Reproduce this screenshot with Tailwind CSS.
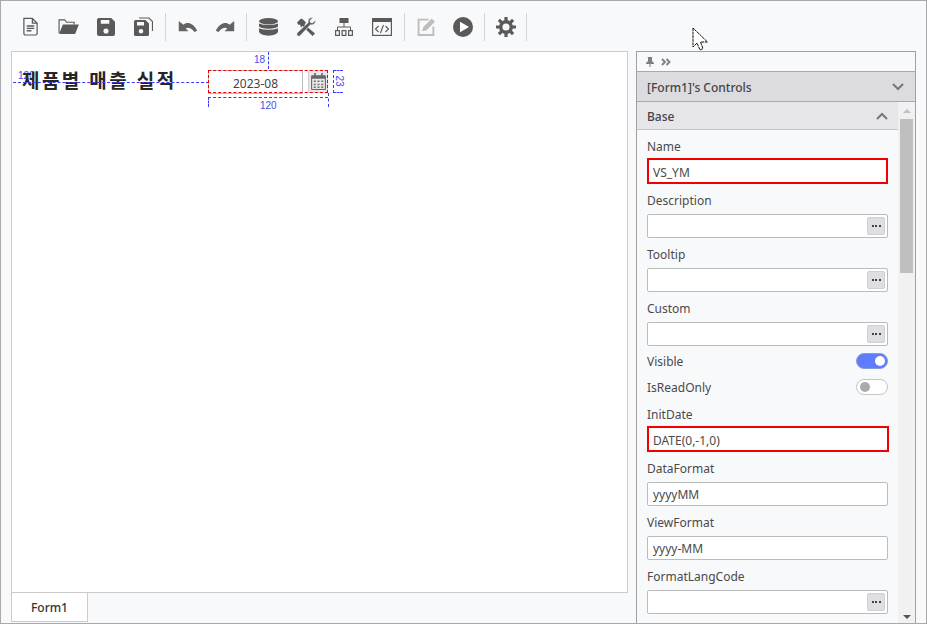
<!DOCTYPE html>
<html lang="ko"><head><meta charset="utf-8"><script src="https://cdn.jsdelivr.net/npm/@tailwindcss/browser@4"></script></head>
<body class="m-0 overflow-hidden">
<div class="relative w-[927px] h-[624px] overflow-hidden bg-[#f8f9fb] border border-[#a9a9a9] flex flex-col text-[12px] text-[#4a4a4a] font-['Noto_Sans','Noto_Sans_CJK_KR',sans-serif]">
  <!-- toolbar -->
  <div class="h-[50px] shrink-0 flex items-center pl-[10px] pt-[1px] text-[#5a5a5a]">
    <div class="w-[38px] flex justify-center"><svg width="17" height="19" viewBox="0 0 18 20" fill="none" stroke="currentColor" stroke-width="1.3"><path d="M2 1.500h9l5 5v11a1.500 1.500 0 0 1-1.500 1.500h-11A1.500 1.500 0 0 1 2 17.500z"/><path d="M11 1.500v5h5" /><path d="M5 9.500h8M5 12h8M5 14.500h5" stroke-width="1.500"/></svg></div>
    <div class="w-[38px] flex justify-center"><svg width="21" height="17" viewBox="0 0 22 18"><path fill="none" stroke="currentColor" stroke-width="1.200" d="M1 16V2h6l2 2.500h8V7"/><path fill="currentColor" d="M5 7h17l-4 10H1z"/></svg></div>
    <div class="w-[38px] flex justify-center"><svg width="18" height="18" viewBox="0 0 19 19"><path fill="currentColor" fill-rule="evenodd" d="M2 0h13l4 4v13a2 2 0 0 1-2 2H2a2 2 0 0 1-2-2V2a2 2 0 0 1 2-2zm2 2v4h9V2zm5.500 9a2.700 2.700 0 1 0 0 5.400a2.700 2.700 0 0 0 0-5.400z"/></svg></div>
    <div class="w-[37px] flex justify-center"><svg width="19" height="19" viewBox="0 0 19 19"><path fill="none" stroke="currentColor" stroke-width="1.200" d="M5 1h10l3.500 3.500V14"/><path fill="currentColor" fill-rule="evenodd" d="M1.500 3h10l3.500 3.500V17.500a1.500 1.500 0 0 1-1.500 1.500h-12A1.500 1.500 0 0 1 0 17.500v-13A1.500 1.500 0 0 1 1.500 3zm1.500 2v3.500h7V5zm4 7a2.300 2.300 0 1 0 0 4.600a2.300 2.300 0 0 0 0-4.600z"/></svg></div>
    <div class="w-px h-[28px] bg-[#d4d4d4] mx-[3px]"></div>
    <div class="w-[37px] flex justify-center"><svg width="20" height="12" viewBox="0 0 20 13"><path fill="#636363" d="M5 4C9 .8 15 1.500 20 10.500l-3 1.500C13.500 7.500 10 6.500 7.500 8L10.500 11H0V0z"/></svg></div>
    <div class="w-[38px] flex justify-center"><svg width="20" height="12" viewBox="0 0 20 13"><path fill="#636363" d="M15 4C11 .8 5 1.500 0 10.500l3 1.500C6.500 7.500 10 6.500 12.500 8L9.500 11H20V0z"/></svg></div>
    <div class="w-px h-[28px] bg-[#d4d4d4] mx-[2px]"></div>
    <div class="w-[38px] flex justify-center"><svg width="19" height="18" viewBox="0 0 19 18" fill="currentColor"><ellipse cx="9.500" cy="3.200" rx="9.500" ry="3.200"/><path d="M0 5.200c2 2.300 17 2.300 19 0v3c-1 3.300-18 3.300-19 0zM0 10c2 2.300 17 2.300 19 0v3.500c-1 5.500-18 5.500-19 0z"/></svg></div>
    <div class="w-[37px] flex justify-center"><svg width="20" height="20" viewBox="0 0 20 20" fill="currentColor"><path d="M1 5.500 5 1.500 7 2.500 10 5.500 8.500 7.500 19 16.500 16.500 19 6.500 9 5 10.500 4 7.500 2.500 8z"/><path d="M19.500 3 16.500 6 14.500 5.500 14 3.500 17 .8C14.500 0 11.500 2 12.200 5.500L1.500 15.500C.5 16.500.5 18 1.500 18.800S3.500 19.500 4.300 18.500L14.500 7.800C17.500 8.500 20 6 19.500 3z" stroke="#f8f9fb" stroke-width=".7"/></svg></div>
    <div class="w-[39px] flex justify-center"><svg width="18" height="18" viewBox="0 0 18 18"><rect x="4.500" width="9" height="5" fill="currentColor"/><path fill="none" stroke="currentColor" d="M9 5v4M2.500 12V9h13v3"/><path fill="none" stroke="currentColor" stroke-width="1.200" d="M.6 12.600h3.800v4.800H.6zM7.100 12.600h3.800v4.800H7.100zM13.600 12.600h3.800v4.800h-3.800z"/></svg></div>
    <div class="w-[38px] flex justify-center"><svg width="20" height="18" viewBox="0 0 20 18"><rect x=".6" y=".6" width="18.800" height="16.800" fill="none" stroke="currentColor" stroke-width="1.200"/><rect width="20" height="4" fill="currentColor"/><path fill="none" stroke="currentColor" stroke-width="1.100" d="M6.500 8l-3 3 3 3M13.500 8l3 3-3 3M11.500 7l-3 8"/></svg></div>
    <div class="w-px h-[28px] bg-[#d4d4d4] mx-[3px]"></div>
    <div class="w-[36px] flex justify-center"><svg width="19" height="19" viewBox="0 0 18 18"><path fill="none" stroke="#bdbdbd" stroke-width="1.800" d="M11 2.500H1.500v14.500h14V9"/><path fill="#bdbdbd" d="M6 9.500L14 1.500l3 3-8 8-4 1z"/></svg></div>
    <div class="w-[37px] flex justify-center"><svg width="20" height="20" viewBox="0 0 20 20"><circle cx="10" cy="10" r="10" fill="currentColor"/><path fill="#fff" d="M7 4.800v10.400L16 10z"/></svg></div>
    <div class="w-px h-[28px] bg-[#d4d4d4] mx-[3px]"></div>
    <div class="w-[35px] flex justify-center"><svg width="20" height="20" viewBox="0 0 20 20"><circle cx="10" cy="10" r="5.300" fill="none" stroke="currentColor" stroke-width="3.400"/><path stroke="currentColor" stroke-width="3.200" d="M10 0v4M10 16v4M0 10h4M16 10h4M2.900 2.900l2.800 2.800M14.300 14.300l2.800 2.800M17.100 2.900l-2.800 2.800M5.700 14.300l-2.800 2.800"/></svg></div>
    <div class="w-px h-[28px] bg-[#d4d4d4] mx-[3px]"></div>
  </div>

  <div class="flex-1 min-h-0 flex pl-[10px] pr-[11px] gap-[8px]">
    <!-- designer -->
    <div class="w-[617px] shrink-0 flex flex-col">
      <div class="relative h-[542px] shrink-0 bg-white border border-[#cbcbcb]">
        <span class="absolute left-[6px] top-[18px] text-[10px] leading-[12px] text-[#4a4af0] font-['Liberation_Sans',sans-serif]">120</span>
        <h1 class="absolute left-[10px] top-[15px] m-0 text-[19px] leading-[26px] font-bold text-[#262626] tracking-[2.400px] whitespace-nowrap font-['Noto_Sans_CJK_KR',sans-serif]">제품별 매출 실적</h1>
        <div class="absolute left-[1px] top-[30px] w-[196px] border-t border-dashed border-[#3a3aff]"></div>
        <div class="absolute left-[256px] top-0 h-[17px] border-l border-dashed border-[#3a3aff]"></div>
        <span class="absolute left-[242px] top-[1px] text-[10px] leading-[14px] text-[#4a4af0] font-['Liberation_Sans',sans-serif]">18</span>
        <div class="absolute left-[196px] top-[18px] w-[95px] h-[24px] border border-[#bdbdbd] bg-white flex items-center justify-center pt-[3px] text-[12px] text-[#444]">2023-08</div>
        <div class="absolute left-[296px] top-[18px] w-[20px] h-[23px] border border-[#cfcfcf] bg-[#e8e8ea] flex items-center justify-center"><svg width="15" height="17" viewBox="0 0 14 16"><path fill="#666" d="M3 0h1.500v2h5V0H11v2h2a1 1 0 0 1 1 1v12a1 1 0 0 1-1 1H1a1 1 0 0 1-1-1V3a1 1 0 0 1 1-1h2zM1 5.500V15h12V5.500z"/><path fill="#777" d="M2.500 7h2v1.500h-2zM6 7h2v1.500H6zM9.500 7h2v1.500h-2zM2.500 10h2v1.500h-2zM6 10h2v1.500H6zM9.500 10h2v1.500h-2zM2.500 12.800h2v1.200h-2zM6 12.800h2v1.200H6zM9.500 12.800h2v1.200h-2z"/></svg></div>
        <div class="absolute left-[196px] top-[18px] w-[120px] h-[23px] border border-dashed border-[#f00000]"></div>
        <div class="absolute left-[196px] top-[45px] w-[120px] border-t border-dashed border-[#3a3aff]"></div>
        <div class="absolute left-[196px] top-[45px] h-[10px] border-l border-dashed border-[#3a3aff]"></div>
        <div class="absolute left-[316px] top-[41px] h-[14px] border-l border-dashed border-[#3a3aff]"></div>
        <span class="absolute left-[248px] top-[48px] text-[10px] leading-[12px] text-[#4a4af0] font-['Liberation_Sans',sans-serif]">120</span>
        <div class="absolute left-[321px] top-[18px] w-[10px] h-[23px] border-y border-l border-dashed border-[#3a3aff]"></div>
        <span class="absolute left-[321px] top-[23px] text-[10px] leading-[12px] text-[#4a4af0] rotate-90 font-['Liberation_Sans',sans-serif]">23</span>
      </div>
      <div class="flex"><div class="w-[77px] h-[29px] pt-[1px] bg-white border-x border-b border-[#cbcbcb] flex items-center justify-center font-medium text-[#333]">Form1</div></div>
    </div>

    <!-- panel -->
    <div class="w-[280px] shrink-0 border-x border-t border-[#a0a0a0] flex flex-col mt-0 h-[573px]">
      <div class="h-[19px] shrink-0 flex items-center pl-[8px] gap-[6px] text-[#888]">
        <svg width="10" height="10" viewBox="0 0 10 10" fill="#808080"><path d="M2.500 0h5l-.5 1v3l2 2v1H5.500v3h-1V7H1V6l2-2V1z"/></svg>
        <svg width="10" height="8" viewBox="0 0 10 8" fill="none" stroke="#808080" stroke-width="1.900"><path d="M1 1l3 3-3 3M5.500 1l3 3-3 3"/></svg>
      </div>
      <div class="h-[31px] shrink-0 bg-[#dcdce0] border-y border-[#a9a9a9] flex items-center justify-between pl-[10px] pr-[11px] font-medium text-[#444]">
        <span class="mt-[2px]">[Form1]'s Controls</span>
        <svg width="12" height="8" viewBox="0 0 12 8" fill="none" stroke="#777" stroke-width="2"><path d="M1 1l5 5 5-5"/></svg>
      </div>
      <div class="flex-1 min-h-0 flex">
        <div class="w-[261px] shrink-0 flex flex-col">
          <div class="h-[28px] shrink-0 bg-[#e6e6ea] border-b border-[#c8c8c8] flex items-center justify-between pl-[10px] pr-[10px] font-medium text-[#444]">
            <span class="mt-[2px]">Base</span>
            <svg width="12" height="8" viewBox="0 0 12 8" fill="none" stroke="#777" stroke-width="2"><path d="M1 7l5-5 5 5"/></svg>
          </div>
          <div class="px-[10px] flex flex-col">
            <label class="h-[28px] flex items-end pb-[2px] leading-[18px]">Name</label>
            <div class="w-[241px] h-[26px] pt-[3px] border-2 border-[#f00000] bg-white flex items-center pl-[4px]">VS_YM</div>
            <label class="h-[30px] flex items-end pb-[4px] leading-[18px]">Description</label>
            <div class="w-[241px] h-[24px] border border-[#bcbcbc] rounded-[2px] bg-white flex items-center justify-end pr-[2px]"><button class="w-[18px] h-[18px] bg-[#dfdfe3] border border-[#cfcfd3] rounded-[2px] flex items-center justify-center gap-[1.500px]"><i class="w-[2px] h-[2px] bg-[#444]"></i><i class="w-[2px] h-[2px] bg-[#444]"></i><i class="w-[2px] h-[2px] bg-[#444]"></i></button></div>
            <label class="h-[30px] flex items-end pb-[4px] leading-[18px]">Tooltip</label>
            <div class="w-[241px] h-[24px] border border-[#bcbcbc] rounded-[2px] bg-white flex items-center justify-end pr-[2px]"><button class="w-[18px] h-[18px] bg-[#dfdfe3] border border-[#cfcfd3] rounded-[2px] flex items-center justify-center gap-[1.500px]"><i class="w-[2px] h-[2px] bg-[#444]"></i><i class="w-[2px] h-[2px] bg-[#444]"></i><i class="w-[2px] h-[2px] bg-[#444]"></i></button></div>
            <label class="h-[30px] flex items-end pb-[4px] leading-[18px]">Custom</label>
            <div class="w-[241px] h-[24px] border border-[#bcbcbc] rounded-[2px] bg-white flex items-center justify-end pr-[2px]"><button class="w-[18px] h-[18px] bg-[#dfdfe3] border border-[#cfcfd3] rounded-[2px] flex items-center justify-center gap-[1.500px]"><i class="w-[2px] h-[2px] bg-[#444]"></i><i class="w-[2px] h-[2px] bg-[#444]"></i><i class="w-[2px] h-[2px] bg-[#444]"></i></button></div>
            <div class="w-[241px] h-[26px] mt-[2px] flex items-center justify-between"><span class="pt-[2px]">Visible</span><span class="w-[32px] h-[16px] rounded-full bg-[#5f7cff] border border-[#8a9ad8] flex items-center justify-end pr-[2px]"><i class="w-[10px] h-[10px] rounded-full bg-white"></i></span></div>
            <div class="w-[241px] h-[26px] flex items-center justify-between"><span class="pt-[2px]">IsReadOnly</span><span class="w-[32px] h-[16px] rounded-full bg-white border border-[#c4c4c4] flex items-center pl-[3px]"><i class="w-[10px] h-[10px] rounded-full bg-[#aaa]"></i></span></div>
            <label class="h-[26px] flex items-end pb-[2px] leading-[18px]">InitDate</label>
            <div class="w-[242px] h-[26px] pt-[3px] border-2 border-[#f00000] bg-white flex items-center pl-[4px]">DATE(0,-1,0)</div>
            <label class="h-[30px] flex items-end pb-[4px] leading-[18px]">DataFormat</label>
            <div class="w-[241px] h-[24px] pt-[1px] border border-[#bcbcbc] rounded-[2px] bg-white flex items-center pl-[5px]">yyyyMM</div>
            <label class="h-[30px] flex items-end pb-[4px] leading-[18px]">ViewFormat</label>
            <div class="w-[241px] h-[24px] pt-[1px] border border-[#bcbcbc] rounded-[2px] bg-white flex items-center pl-[5px]">yyyy-MM</div>
            <label class="h-[30px] flex items-end pb-[4px] leading-[18px]">FormatLangCode</label>
            <div class="w-[241px] h-[24px] border border-[#bcbcbc] rounded-[2px] bg-white flex items-center justify-end pr-[2px]"><button class="w-[18px] h-[18px] bg-[#dfdfe3] border border-[#cfcfd3] rounded-[2px] flex items-center justify-center gap-[1.500px]"><i class="w-[2px] h-[2px] bg-[#444]"></i><i class="w-[2px] h-[2px] bg-[#444]"></i><i class="w-[2px] h-[2px] bg-[#444]"></i></button></div>
          </div>
        </div>
        <!-- scrollbar -->
        <div class="w-[17px] shrink-0 bg-[#f1f1f1] flex flex-col items-start pl-[2px]">
          <div class="w-[13px] h-[17px] shrink-0 flex items-center justify-center"><i class="w-0 h-0 border-x-[4px] border-x-transparent border-b-[4px] border-b-[#c0c0c0]"></i></div>
          <div class="w-[13px] h-[154px] bg-[#bfbfbf]"></div>
          <div class="flex-1"></div>
          <div class="w-[13px] h-[14px] shrink-0 flex items-center justify-center"><i class="w-0 h-0 border-x-[4px] border-x-transparent border-t-[4px] border-t-[#555]"></i></div>
        </div>
      </div>
    </div>
  </div>

  <!-- mouse pointer -->
  <svg class="absolute left-[691px] top-[26px]" width="18" height="25" viewBox="0 0 18 25"><path fill="#fff" stroke="#111" stroke-width="1" stroke-dasharray="3 .6" d="M1 1V20L5 16 8 23 11 21.500 8.500 15H15.500z"/></svg>
</div>
</body></html>
